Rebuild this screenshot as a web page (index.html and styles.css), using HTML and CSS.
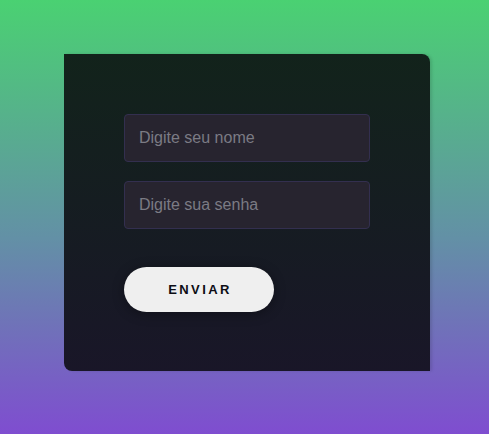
FILE: index.html
```html
<!DOCTYPE html>
<html lang="pt-BR">
<head>
<meta charset="utf-8">
<title>Login</title>
<link rel="stylesheet" href="styles.css">
</head>
<body>
  <form class="card">
    <input class="field" type="text" placeholder="Digite seu nome">
    <input class="field" type="password" placeholder="Digite sua senha">
    <button class="btn" type="button">ENVIAR</button>
  </form>
</body>
</html>
```

FILE: styles.css
```css
* { box-sizing: border-box; }
html, body { margin: 0; height: 100%; }
body {
  width: 489px;
  height: 434px;
  background: linear-gradient(to bottom, #4ad172 0%, #6390a6 55%, #7f4dd0 100%);
  padding: 54px 0 0 64px;
  font-family: "Liberation Sans", Arial, sans-serif;
  overflow: hidden;
}
.card {
  width: 366px;
  height: 317px;
  padding: 60px 60px 0 60px;
  margin: 0;
  display: flex;
  flex-direction: column;
  align-items: flex-start;
  background: linear-gradient(to bottom, #12231b 0%, #191628 100%);
  border-radius: 0 8px 0 8px;
  box-shadow: 2px 0 3px rgba(0,0,0,0.12);
}
.field {
  width: 246px;
  height: 48px;
  padding: 0 14px;
  border: 1px solid #332f4f;
  border-radius: 4px;
  background: #27242f;
  color: #ddd;
  font-family: "Liberation Sans", Arial, sans-serif;
  font-size: 16px;
  outline: none;
}
.field::placeholder { color: #7b7b84; }
.field + .field { margin-top: 19px; }
.btn {
  margin-top: 38px;
  width: 150px;
  height: 45px;
  border: none;
  border-radius: 23px;
  background: #efefef;
  color: #0d0d14;
  font-family: "Liberation Sans", Arial, sans-serif;
  font-weight: bold;
  font-size: 13px;
  letter-spacing: 2.4px;
  padding: 0 0 0 2px;
  box-shadow: 0 2px 12px rgba(0,0,0,0.35);
  cursor: pointer;
}
```
